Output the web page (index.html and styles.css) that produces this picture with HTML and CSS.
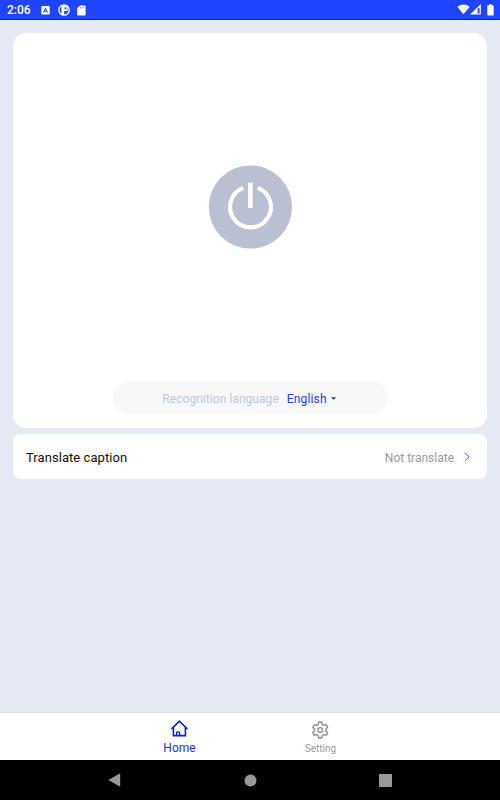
FILE: index.html
```html
<!DOCTYPE html>
<html lang="en">

<head>
  <meta charset="UTF-8">
  <meta name="viewport" content="width=device-width, initial-scale=1.0">
  <title>Home</title>
  <link rel="stylesheet" href="styles.css">
</head>

<body>
  <div class="screen">
    <div class="status-bar">
      <span class="clock">2:06</span>
      <div class="status-left">
        <svg width="9" height="9" viewBox="0 0 9 9">
          <rect x="0.3" width="8.4" height="8.4" rx="1" fill="#fff" />
          <path d="M2.6 6.6L4.5 2L6.4 6.6M3.2 5.1H5.8" fill="none" stroke="#1f44ff" stroke-width="1" />
        </svg>
        <svg width="12" height="12" viewBox="0 0 12 12">
          <circle cx="6" cy="6" r="5.2" fill="none" stroke="#fff" stroke-width="1.3" />
          <path d="M3.4 1.5H9.6V7H6.2V11H3.4Z" fill="#fff" />
          <path d="M6.6 3.4H8.3V5.2H6.6Z" fill="#1f44ff" />
        </svg>
        <svg width="9" height="11" viewBox="0 0 9 11">
          <path d="M3 0.5H7.8Q8.6 0.5 8.6 1.3V9.7Q8.6 10.5 7.8 10.5H1Q0.2 10.5 0.2 9.7V3.3Z" fill="#fff" />
          <path d="M3.5 1.8V3.4M5.2 1.8V3.4M6.9 1.8V3.4" stroke="#1f44ff" stroke-width="0.5" />
        </svg>
      </div>
      <div class="status-right">
        <svg width="13" height="11" viewBox="0 0 13 11">
          <path d="M0.3 2.8Q6.5 -1.8 12.7 2.8L6.5 10.3Z" fill="#fff" />
        </svg>
        <svg width="11" height="11" viewBox="0 0 11 11">
          <path d="M0 10.6L10.8 0V10.6Z" fill="#fff" />
          <path d="M7.6 4.2H9.6V9.5H7.6Z" fill="#1f44ff" />
        </svg>
        <svg class="battery" width="7" height="12" viewBox="0 0 7 12">
          <path d="M2.2 0.3H4.8V1.3H6Q6.7 1.3 6.7 2V10.8Q6.7 11.5 6 11.5H1Q0.3 11.5 0.3 10.8V2Q0.3 1.3 1 1.3H2.2Z" fill="#fff" />
        </svg>
      </div>
    </div>

    <div class="content">
      <div class="power-card">
        <button class="power-button" aria-label="Power">
          <svg width="84" height="84" viewBox="0 0 84 84">
            <circle cx="42.4" cy="42" r="41.6" fill="#babfd1" />
            <path d="M35.2 22.9A20.4 20.4 0 1 0 49.8 22.9" fill="none" stroke="#fff" stroke-width="4.2" />
            <path d="M42.4 17.7V43" stroke="#fff" stroke-width="4.6" />
          </svg>
        </button>
        <div class="language">
          <span class="language-label">Recognition language</span>
          <span class="language-value">English</span>
          <svg width="5" height="3" viewBox="0 0 5 3">
            <path d="M0 0.2H5L2.5 2.8Z" fill="#1626e8" />
          </svg>
        </div>
      </div>

      <div class="row-card">
        <span class="row-title">Translate caption</span>
        <span class="row-value">Not translate</span>
        <svg width="6" height="10" viewBox="0 0 6 10">
          <path d="M0.7 0.6L5.2 4.8L0.7 9" fill="none" stroke="#3f6fe8" stroke-width="1" />
        </svg>
      </div>
    </div>

    <div class="tab-bar">
      <div class="tab active">
        <svg width="18" height="18" viewBox="0 0 18 18" fill="none" stroke="#0d1fe0" stroke-width="1.6">
          <path d="M0.5 9L8.4 1.2L16.4 9" />
          <path d="M2.4 7.6V15.6H14.4V7.6" />
          <path d="M5.7 15.4V12.2H8.6V15.4" stroke-width="1.3" />
        </svg>
        <span>Home</span>
      </div>
      <div class="tab">
        <svg width="18" height="18" viewBox="0 0 18 18" fill="none" stroke="#909090" stroke-width="1.4">
          <path d="M6.8 1H9.6L10.2 3.3L11.8 4.3L14.1 3.6L15.6 6.4L13.9 8V10L15.6 11.6L14.1 14.4L11.8 13.7L10.2 14.7L9.6 17H6.8L6.2 14.7L4.6 13.7L2.3 14.4L0.8 11.6L2.5 10V8L0.8 6.4L2.3 3.6L4.6 4.3L6.2 3.3Z" stroke-linejoin="round" />
          <circle cx="8.2" cy="9" r="2.4" />
        </svg>
        <span>Setting</span>
      </div>
    </div>

    <div class="nav-bar">
      <svg width="13" height="14" viewBox="0 0 13 14">
        <path d="M0.4 7L12.2 0.3V13.7Z" fill="#999" />
      </svg>
      <svg width="13" height="13" viewBox="0 0 13 13">
        <circle cx="6.5" cy="6.5" r="6" fill="#999" />
      </svg>
      <svg width="13" height="13" viewBox="0 0 13 13">
        <rect width="13" height="13" rx="0.8" fill="#999" />
      </svg>
    </div>
  </div>
</body>

</html>
```

FILE: styles.css
```css
body {
  margin: 0;
  font-family: Roboto, sans-serif;
  background-color: #e4e9f3;
}

svg {
  display: block;
  flex-shrink: 0;
}

.screen {
  display: flex;
  flex-direction: column;
  width: 500px;
  height: 800px;
  overflow: hidden;
}

/* Status bar */
.status-bar {
  display: flex;
  align-items: center;
  box-sizing: border-box;
  height: 20px;
  padding: 0 6px 0 7px;
  background-color: #1f44ff;
  border-bottom: 1px solid #0b22d8;
  color: #fff;
}

.clock {
  width: 34px;
  font-size: 12px;
  font-weight: 500;
  line-height: 19px;
  padding-top: 2px;
}

.status-left {
  display: flex;
  align-items: center;
  gap: 7.5px;
  padding-top: 1px;
}

.status-right {
  display: flex;
  align-items: center;
  margin-left: auto;
}

.battery {
  margin-left: 6px;
}

/* Cards */
.content {
  flex: 1;
  padding: 13px 13px 0;
}

.power-card {
  display: flex;
  flex-direction: column;
  align-items: center;
  justify-content: space-between;
  box-sizing: border-box;
  height: 395px;
  padding: 132px 0 14px;
  background-color: #fff;
  border-radius: 13px;
}

.power-button {
  padding: 0;
  border: none;
  background: none;
  cursor: pointer;
}

.language {
  display: flex;
  align-items: center;
  justify-content: center;
  box-sizing: border-box;
  width: 275px;
  height: 33px;
  padding: 2px 2px 0 0;
  border-radius: 17px;
  background-color: #f8f8f8;
  font-size: 12px;
}

.language-label {
  margin-right: 8px;
  color: #b9c8e2;
  letter-spacing: 0.05px;
}

.language-value {
  margin-right: 4px;
  color: #2440f0;
  letter-spacing: 0.15px;
}

.row-card {
  display: flex;
  align-items: center;
  box-sizing: border-box;
  height: 45px;
  margin-top: 6px;
  padding: 0 17px 0 13px;
  background-color: #fff;
  border-radius: 8px;
}

.row-title {
  padding-top: 1px;
  font-size: 13px;
  color: #111;
  letter-spacing: 0.06px;
}

.row-value {
  margin-left: auto;
  margin-right: 10px;
  padding-top: 2px;
  font-size: 12px;
  color: #999;
}

/* Bottom tabs */
.tab-bar {
  display: flex;
  justify-content: center;
  box-sizing: border-box;
  height: 48px;
  border-top: 1px solid #dce0ea;
  background-color: #fff;
}

.tab {
  display: flex;
  flex-direction: column;
  align-items: center;
  width: 141px;
  padding-top: 8px;
  font-size: 10px;
  line-height: 19px;
  color: #999;
}

.tab.active {
  padding-top: 7px;
  font-size: 12px;
  line-height: 20px;
  color: #2035ee;
}

/* Android navigation */
.nav-bar {
  display: flex;
  align-items: center;
  justify-content: space-between;
  box-sizing: border-box;
  height: 40px;
  padding: 0 108px;
  background-color: #000;
}
```
